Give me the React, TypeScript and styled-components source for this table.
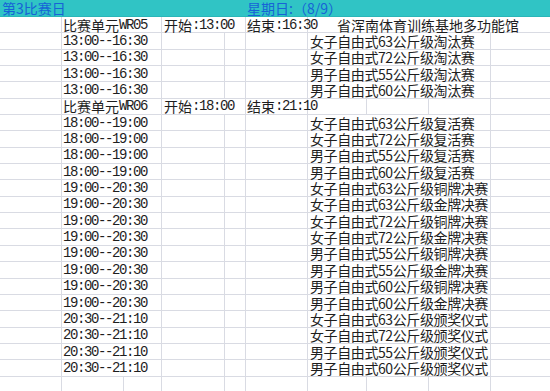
import React from 'react'
import styled, { createGlobalStyle } from 'styled-components'

const GlobalStyle = createGlobalStyle`
  html, body {
    margin: 0;
    padding: 0;
    background: #ffffff;
    overflow: hidden;
  }
  body {
    font-family: "Noto Sans CJK SC", "Noto Sans", sans-serif;
    color: #1e1e1e;
  }
`

// column widths of the sheet, A..J
const COLUMNS = '62px 62px 38px 63px 21px 62px 59px 62px 62px 1fr'
const GRID = '#d9dbe3'
const ROW_HEIGHT = 16.35

const Sheet = styled.div`
  display: flex;
  flex-direction: column;
  width: 550px;
  height: 391px;
  overflow: hidden;
`

const Row = styled.div<{ $height?: number; $band?: boolean }>`
  display: grid;
  grid-template-columns: ${COLUMNS};
  height: ${({ $height }) => $height ?? ROW_HEIGHT}px;
  flex: none;
  background: ${({ $band }) => ($band ? '#30c4c5' : 'transparent')};
`

const Cell = styled.div<{ $span?: number; $pad?: number; $line?: boolean }>`
  grid-column: span ${({ $span }) => $span ?? 1};
  box-sizing: border-box;
  border-bottom: 1px solid ${GRID};
  border-right: ${({ $line }) => ($line === false ? 'none' : `1px solid ${GRID}`)};
  padding-left: ${({ $pad }) => $pad ?? 1}px;
  font-size: 14px;
  line-height: 14px;
  white-space: nowrap;
  overflow: visible;
  display: flex;
  align-items: center;
`

const BandCell = styled(Cell)`
  border-bottom: 1px solid #2ab6b8;
  border-right: none;
  color: #1763d6;
`

// SimSun style half-width glyphs
const Half = styled.span`
  font-family: "Liberation Mono", monospace;
  font-size: 14px;
  letter-spacing: -1.4px;
`

const Event = styled.span`
  letter-spacing: -0.4px;
`

type Unit = { code: string; start: string; end: string; venue?: string }

const DayHeader = () => (
  <Row $height={17} $band>
    <BandCell $span={5} $pad={2}>第3比赛日</BandCell>
    <BandCell $span={5} $pad={1}>星期日:（8/9）</BandCell>
  </Row>
)

const UnitRow = ({ code, start, end, venue }: Unit) => (
  <Row>
    <Cell />
    <Cell $span={2} $pad={1}>
      比赛单元<Half>{code}</Half>
    </Cell>
    <Cell $span={2} $pad={2}>
      开始<Half>:{start}</Half>
    </Cell>
    <Cell $pad={1}>
      结束<Half>:{end}</Half>
    </Cell>
    {venue ? (
      <Cell $span={4} $pad={29} $line={false}>{venue}</Cell>
    ) : (
      <>
        <Cell />
        <Cell />
        <Cell />
        <Cell $line={false} />
      </>
    )}
  </Row>
)

const SessionRow = ({ time, event }: { time: string; event: string }) => (
  <Row>
    <Cell />
    <Cell $span={2} $pad={1}>
      <Half>{time}</Half>
    </Cell>
    <Cell />
    <Cell />
    <Cell />
    <Cell $span={3} $pad={2}>
      <Event>{event}</Event>
    </Cell>
    <Cell $line={false} />
  </Row>
)

const BlankRow = () => (
  <Row>
    {Array.from({ length: 10 }).map((_, i) => (
      <Cell key={i} $line={i < 9} />
    ))}
  </Row>
)

const weights = ['女子自由式63公斤级', '女子自由式72公斤级', '男子自由式55公斤级', '男子自由式60公斤级']

const wr05 = weights.map((w) => ({ time: '13:00--16:30', event: `${w}淘汰赛` }))
const wr06 = [
  ...weights.map((w) => ({ time: '18:00--19:00', event: `${w}复活赛` })),
  ...weights.flatMap((w) => [
    { time: '19:00--20:30', event: `${w}铜牌决赛` },
    { time: '19:00--20:30', event: `${w}金牌决赛` },
  ]),
  ...weights.map((w) => ({ time: '20:30--21:10', event: `${w}颁奖仪式` })),
]

const App = () => (
  <>
    <GlobalStyle />
    <Sheet>
      <DayHeader />
      <UnitRow code="WR05" start="13:00" end="16:30" venue="省浑南体育训练基地多功能馆" />
      {wr05.map((s, i) => (
        <SessionRow key={`a${i}`} {...s} />
      ))}
      <UnitRow code="WR06" start="18:00" end="21:10" />
      {wr06.map((s, i) => (
        <SessionRow key={`b${i}`} {...s} />
      ))}
      <BlankRow />
      <BlankRow />
    </Sheet>
  </>
)

export default App
